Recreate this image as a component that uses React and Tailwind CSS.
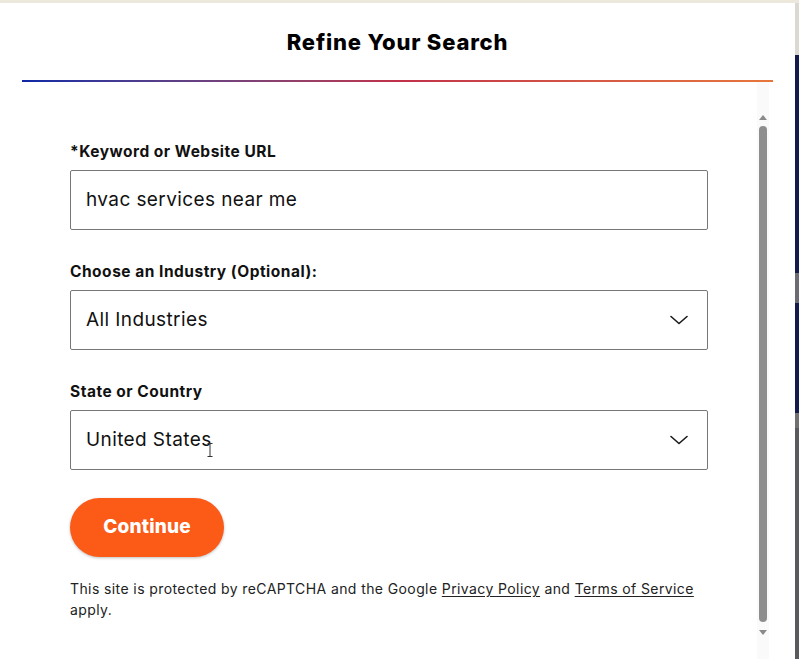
import React from 'react';

function Chevron() {
  return (
    <svg width="18" height="10" viewBox="0 0 18 10" fill="none" className="shrink-0">
      <path d="M1 1.5 L9 8.5 L17 1.5" stroke="#1a1a1a" strokeWidth="1.6" strokeLinecap="round" strokeLinejoin="round" />
    </svg>
  );
}

function Field({ label, value, select, children }) {
  return (
    <div className="flex flex-col">
      <label className="text-[15.5px] leading-[20px] font-bold tracking-[0.5px] text-[#111] mb-[8px]">{label}</label>
      <div className="relative h-[60px] border border-[#777] rounded-[2px] flex items-center justify-between pl-[15px] pr-[19px] bg-white">
        <span className="text-[19px] tracking-[0.4px] text-[#111] mt-[1px]">{value}</span>
        {select && <Chevron />}
        {children}
      </div>
    </div>
  );
}

export default function App() {
  return (
    <div className="w-[799px] h-[659px] overflow-hidden flex flex-col bg-[#ece8dc]" style={{ fontFamily: 'Inter, "Noto Sans", sans-serif' }}>
      <div className="h-[3px] shrink-0" />
      <div className="flex flex-1 min-h-0">
        <div className="w-[795px] bg-white flex flex-col">
          <div className="h-[77px] flex items-center justify-center shrink-0">
            <h2 className="text-[22px] font-extrabold text-black tracking-[0.8px] mt-[1px]">Refine Your Search</h2>
          </div>
          <div className="mx-[22px] h-[2px] bg-gradient-to-r from-[#0b27a6] via-[#c1304a] to-[#e6773b] shrink-0" />
          <div className="flex flex-1 min-h-0 pl-[70px] pr-[26px]">
            <div className="flex-1 flex flex-col pt-[60px] pr-[49px]">
              <div className="flex flex-col gap-[32px]">
                <Field label="*Keyword or Website URL" value="hvac services near me" />
                <Field label="Choose an Industry (Optional):" value="All Industries" select />
                <Field label="State or Country" value="United States" select>
                  <svg width="6" height="14" viewBox="0 0 6 14" className="absolute left-[136px] top-[32px]">
                    <path d="M0.5 0.5 H5.5 M3 0.5 V13.5 M0.5 13.5 H5.5" stroke="#333" strokeWidth="1" fill="none" />
                  </svg>
                </Field>
              </div>
              <button className="mt-[28px] w-[154px] h-[59px] rounded-full bg-[#fb5a17] text-white text-[19px] tracking-[0.2px] font-extrabold shadow-[0_1px_3px_rgba(0,0,0,0.25)]">
                Continue
              </button>
              <p className="mt-[21px] text-[14px] tracking-[0.4px] leading-[21px] text-[#222]">
                This site is protected by reCAPTCHA and the Google{' '}
                <a className="underline underline-offset-2">Privacy Policy</a> and{' '}
                <a className="underline underline-offset-2">Terms of Service</a> apply.
              </p>
            </div>
            <div className="w-[12px] flex flex-col items-center pt-[33px] pb-[24px] bg-[#fafafa]">
              <svg width="8" height="5" viewBox="0 0 8 5"><path d="M4 0 L8 5 H0 Z" fill="#8a8a8a" /></svg>
              <div className="mt-[6px] w-[8px] flex-1 rounded-full bg-[#8e8e8e]" />
              <svg width="8" height="5" viewBox="0 0 8 5" className="mt-[8px]"><path d="M0 0 H8 L4 5 Z" fill="#8a8a8a" /></svg>
            </div>
          </div>
        </div>
        <div className="flex-1 flex flex-col">
          <div className="h-[52px] bg-[#dcd9d0]" />
          <div className="h-[218px] bg-[#141b4d]" />
          <div className="h-[30px] bg-[#6b6b73]" />
          <div className="h-[110px] bg-[#141b4d]" />
          <div className="h-[15px] bg-[#707070]" />
          <div className="flex-1 bg-[#5a5a5e]" />
        </div>
      </div>
    </div>
  );
}
